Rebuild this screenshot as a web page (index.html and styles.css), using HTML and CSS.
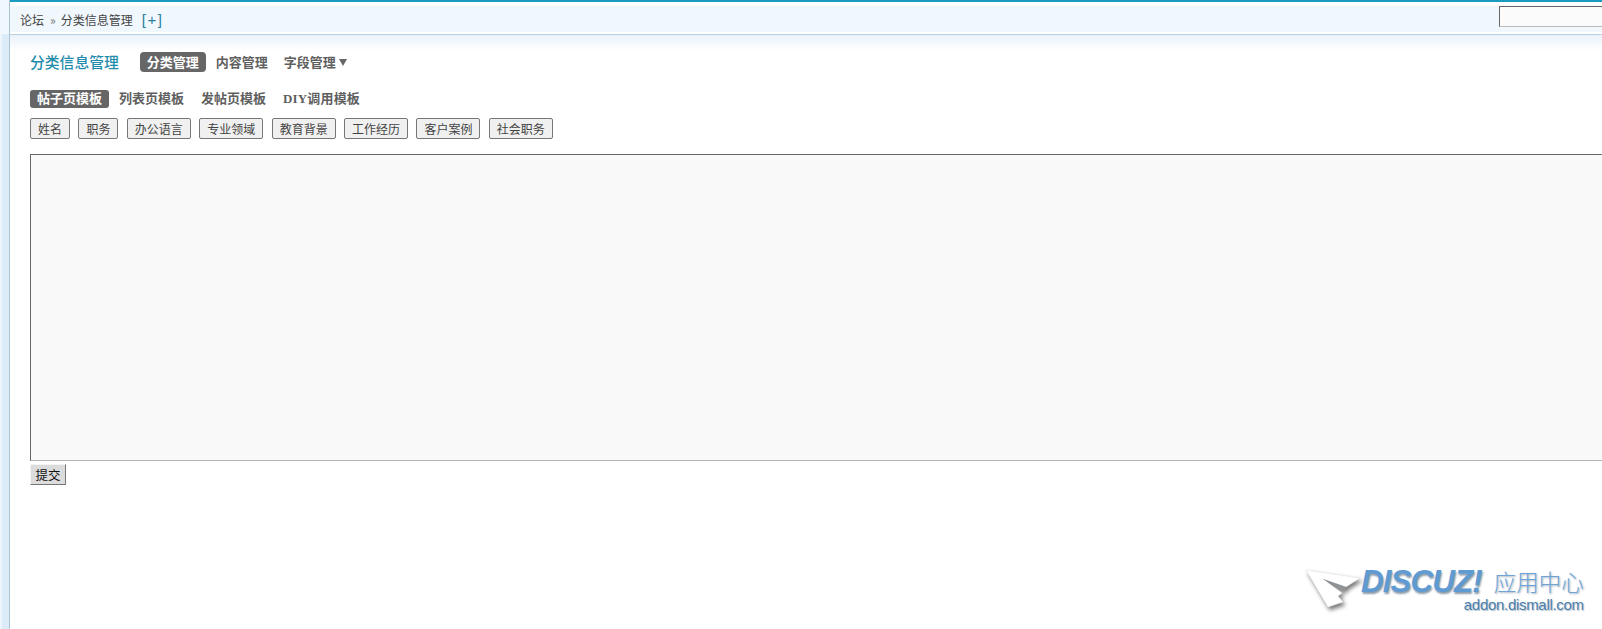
FILE: index.html
```html
<!DOCTYPE html>
<html lang="zh-CN">
<head>
<meta charset="utf-8">
<title>分类信息管理</title>
<link rel="stylesheet" href="styles.css">
</head>
<body>
<div class="page">
  <aside class="rail"></aside>
  <main class="main">
    <header class="topbar">
      <nav class="crumb"><span>论坛</span><span class="sep">»</span><span>分类信息管理</span><a class="add">[+]</a></nav>
      <input class="search" type="text" aria-label="搜索">
    </header>
    <section class="content">
      <div class="titlerow">
        <h1 class="title">分类信息管理</h1>
        <ul class="tabs">
          <li class="tab tab-on">分类管理</li>
          <li class="tab">内容管理</li>
          <li class="tab tab-more">字段管理<span class="caret"></span></li>
        </ul>
      </div>
      <ul class="subtabs">
        <li class="subtab subtab-on">帖子页模板</li>
        <li class="subtab">列表页模板</li>
        <li class="subtab">发帖页模板</li>
        <li class="subtab">DIY调用模板</li>
      </ul>
      <div class="fields">
        <button class="field" type="button">姓名</button>
        <button class="field" type="button">职务</button>
        <button class="field" type="button">办公语言</button>
        <button class="field" type="button">专业领域</button>
        <button class="field" type="button">教育背景</button>
        <button class="field" type="button">工作经历</button>
        <button class="field" type="button">客户案例</button>
        <button class="field" type="button">社会职务</button>
      </div>
      <textarea class="editor" aria-label="模板"></textarea>
      <button class="submit" type="button">提交</button>
    </section>
  </main>
</div>
<div class="mark">
  <svg class="mark-arrow" width="62" height="50" viewBox="0 0 62 50" aria-hidden="true">
    <path d="M2 4 L56 12 L42 21 L19 13 L38 27 L34 30 L39 36 L24 41 Z" fill="#fff" stroke="#e4e6e8" stroke-width=".6"/>
    <path d="M19 13 L42 21 L40 25 Z" fill="#8f9498"/>
  </svg>
  <div class="mark-text">
    <div class="mark-top"><span class="mark-logo">DISCUZ!</span><span class="mark-cn">应用中心</span></div>
    <div class="mark-url">addon.dismall.com</div>
  </div>
</div>
</body>
</html>
```
FILE: styles.css
```css
html, body {
  margin: 0;
  padding: 0;
  height: 100%;
  overflow: hidden;
  background: #fff;
}
body {
  position: relative;
  font-family: "Noto Sans CJK SC", "Liberation Sans", sans-serif;
  color: #444;
}
ul { list-style: none; margin: 0; padding: 0; }
.page { display: flex; width: 1602px; height: 629px; }
.rail {
  flex: 0 0 9px;
  border-right: 1px solid #a9c4d3;
  background:
    linear-gradient(#f1f8fd, #f1f8fd) top left / 100% 34px no-repeat,
    linear-gradient(90deg, #eef6fc 0 2px, #dbecf8 2px);
}
.main { flex: 1; min-width: 0; overflow: hidden; }
.topbar {
  box-sizing: border-box;
  height: 35px;
  display: flex;
  justify-content: space-between;
  align-items: flex-start;
  border-top: 2px solid #1a9cc0;
  border-bottom: 1px solid #b9cfdc;
  box-shadow: inset 0 -2px 0 #fff, inset 0 4px 0 #fff;
  background: #f1f8fd;
}
.crumb {
  display: flex;
  align-items: center;
  height: 32px;
  padding: 2px 0 0 10px;
  box-sizing: border-box;
  font-size: 12px;
  color: #444;
}
.sep { margin: 0 5px 0 6px; color: #777; font-size: 12px; }
.add { margin-left: 9px; color: #2b7f9e; letter-spacing: 1.5px; font-family: "Liberation Sans", sans-serif; font-size: 15px; font-weight: 400; }
.search {
  box-sizing: border-box;
  flex: 0 0 200px;
  width: 200px;
  height: 21px;
  margin: 4px -97px 0 0;
  padding: 0;
  background: #fbfbfb;
  border: 1px solid;
  border-color: #666 #ccc #bbb #666;
}
.content {
  padding: 17px 0 0 20px;
  background: linear-gradient(#eaf3fa, #fff 16px);
}
.titlerow { display: flex; align-items: center; height: 20px; }
.title {
  margin: 0 21px 0 0;
  font-size: 14.8px;
  line-height: 20px;
  font-weight: 500;
  color: #1f8cab;
}
.tabs { display: flex; align-items: center; }
.tab {
  padding: 0 7px;
  margin-right: 2px;
  font-size: 13px;
  line-height: 20px;
  font-weight: 700;
  color: #5f5f5f;
}
.tab-on { background: #666; color: #fff; border-radius: 4px; margin-right: 3px; }
.caret {
  display: inline-block;
  margin-left: 3px;
  vertical-align: 1px;
  border-style: solid;
  border-width: 7px 4px 0;
  border-color: #666 transparent transparent;
}
.subtabs { display: flex; margin-top: 18px; height: 18px; align-items: center; }
.subtab {
  padding: 0 7px;
  margin-right: 3px;
  font-family: "Liberation Serif", "Noto Sans CJK SC", serif;
  font-size: 13px;
  line-height: 18px;
  font-weight: 700;
  color: #5f5f5f;
}
.subtab-on { background: #666; color: #fff; border-radius: 3px; margin-right: 3px; }
.subtab:last-child { letter-spacing: .15px; }
.fields { display: flex; gap: 8.4px; margin-top: 10px; }
.field {
  box-sizing: border-box;
  height: 21px;
  padding: 0 7px;
  font-family: inherit;
  font-size: 12px;
  line-height: 19px;
  color: #444;
  background: #f0f0f0;
  border: 1px solid #777;
  border-radius: 2px;
}
.editor {
  display: block;
  box-sizing: border-box;
  width: 1700px;
  height: 307px;
  margin: 15px 0 0;
  padding: 0;
  background: #f9f9f9;
  border: 1px solid;
  border-color: #666 #ccc #b5b5b5 #666;
  resize: none;
  outline: none;
}
.submit {
  display: block;
  box-sizing: border-box;
  width: 36px;
  height: 21px;
  margin-top: 3px;
  padding: 0;
  font-family: inherit;
  font-size: 12.5px;
  color: #111;
  background: #dcdcdc;
  border: 1px solid;
  border-color: #f4f4f4 #777 #777 #f4f4f4;
}
.mark {
  position: absolute;
  left: 1304px;
  top: 566px;
  display: flex;
  align-items: flex-start;
}
.mark-arrow { filter: drop-shadow(2px 3px 2px #777); }
.mark-text { margin-left: -5px; }
.mark-top { display: flex; align-items: center; height: 30px; }
.mark-logo {
  font-family: "Liberation Sans", sans-serif;
  font-size: 31.5px;
  font-style: italic;
  font-weight: 700;
  letter-spacing: -1px;
  color: #5f9bd2;
  text-shadow: 1px 2px 2px #8a9aa8;
}
.mark-cn {
  margin-left: 12px;
  font-size: 22.5px;
  line-height: 28px;
  font-weight: 300;
  color: #6fa3d6;
  text-shadow: 1px 1px 2px #9aa8b4;
}
.mark-url {
  text-align: right;
  margin-top: 1px;
  font-family: "Liberation Sans", sans-serif;
  font-size: 15px;
  line-height: 16px;
  letter-spacing: -.3px;
  color: #4a7fae;
  text-shadow: 1px 1px 1px #b4bec8;
}
```
